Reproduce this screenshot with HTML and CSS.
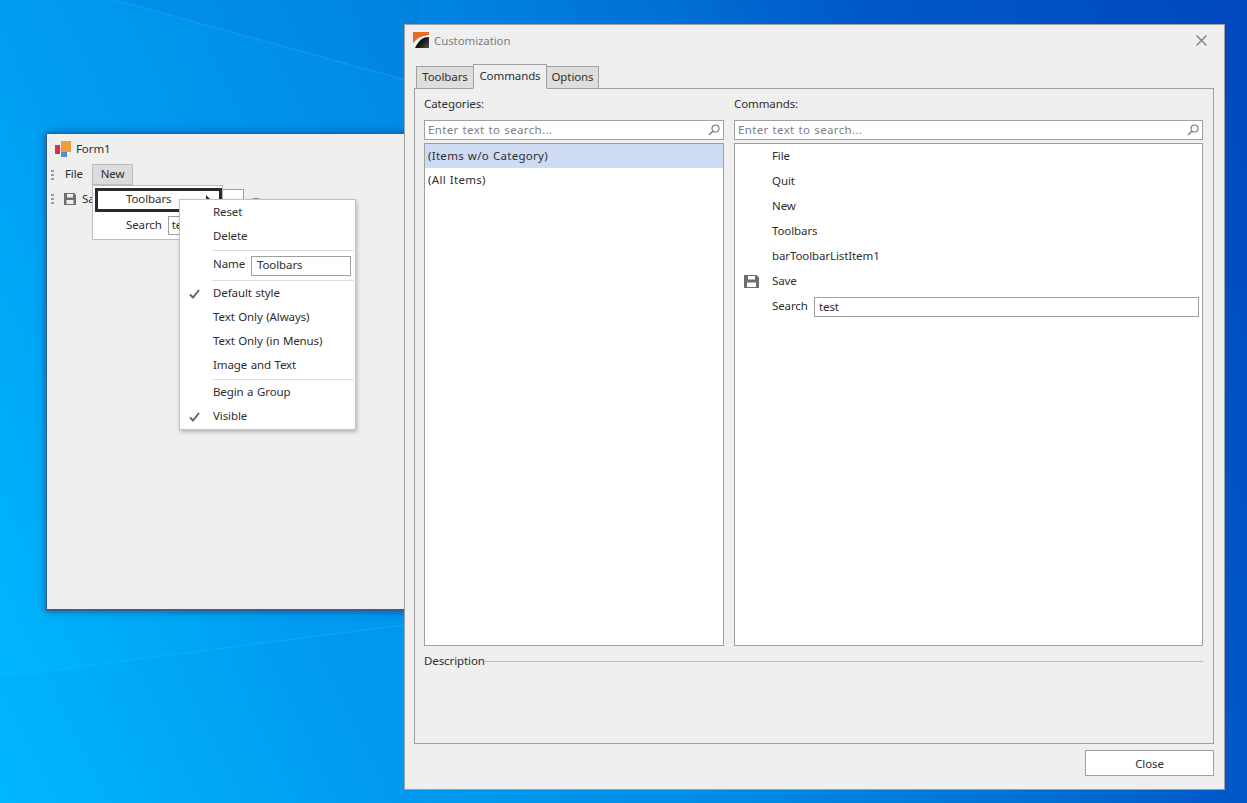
FILE: index.html
```html
<!DOCTYPE html>
<html lang="en">
<head>
<meta charset="utf-8">
<title>Customization</title>
<link rel="stylesheet" href="styles.css">
</head>
<body>
<div class="desktop">
  <svg class="wallpaper" viewBox="0 0 1247 803" preserveAspectRatio="none">
    <path d="M115 0 L420 84 L420 0 Z" fill="#0060c8" opacity=".1"/>
    <path d="M115 0 L420 84" fill="none" stroke="#30a8ff" stroke-width="1.500" opacity=".35"/>
    <path d="M0 677 L420 623 L420 803 L0 803 Z" fill="#0090e8" opacity=".08"/>
    <path d="M0 677 L420 623" fill="none" stroke="#10c0ff" stroke-width="1.500" opacity=".35"/>
  </svg>

  <section class="form">
    <header class="form-title">
      <svg class="form-logo" viewBox="0 0 16 16"><rect x="0" y="4" width="5" height="9" fill="#d4344a"/><rect x="6" y="0" width="10" height="11" fill="#f39a3e"/><rect x="6" y="11" width="6" height="5" fill="#4f8fd0"/></svg>
      <span>Form1</span>
    </header>
    <div class="menubar">
      <i class="grip"></i>
      <span class="menu-item">File</span>
      <span class="menu-item open">New</span>
    </div>
    <div class="toolbar">
      <i class="grip"></i>
      <svg class="save-icon" viewBox="0 0 12 12"><path d="M0 0H10L12 2V12H0Z" fill="#6d6d72"/><rect x="3" y="1" width="6" height="3.500" fill="#efefef"/><rect x="2.500" y="7" width="7" height="4" fill="#efefef"/></svg>
      <span class="tool-label">Save</span>
    </div>
    <div class="tool-input"></div>
    <i class="tool-tip"></i>
    <div class="dropdown">
      <div class="drop-row focus"><span>Toolbars</span><i class="arrow"></i></div>
      <div class="drop-row"><span>Search</span><span class="drop-input">test</span></div>
    </div>
    <div class="context">
      <div class="ctx-row">Reset</div>
      <div class="ctx-row">Delete</div>
      <hr class="ctx-sep">
      <div class="ctx-row name"><span class="name-label">Name</span><span class="name-input">Toolbars</span></div>
      <hr class="ctx-sep">
      <div class="ctx-row"><svg class="check" viewBox="0 0 11 10"><path d="M1 5.500L4 8.500L10 1" fill="none" stroke="#666" stroke-width="2"/></svg>Default style</div>
      <div class="ctx-row">Text Only (Always)</div>
      <div class="ctx-row">Text Only (in Menus)</div>
      <div class="ctx-row">Image and Text</div>
      <hr class="ctx-sep">
      <div class="ctx-row">Begin a Group</div>
      <div class="ctx-row"><svg class="check" viewBox="0 0 11 10"><path d="M1 5.500L4 8.500L10 1" fill="none" stroke="#666" stroke-width="2"/></svg>Visible</div>
    </div>
  </section>

  <section class="dialog">
    <header class="dialog-title">
      <svg class="dialog-logo" viewBox="0 0 16 16">
        <defs><linearGradient id="logo-dark" x1="0" y1="0" x2="1" y2="1"><stop offset=".45" stop-color="#000"/><stop offset="1" stop-color="#555"/></linearGradient></defs>
        <rect width="16" height="16" fill="url(#logo-dark)"/>
        <path d="M0 0H16V3C9 3 4 6 0 11Z" fill="#ea6a22"/>
        <path d="M0 11C4 6 9 3 16 3V5C10 5 6 8 2 16H0Z" fill="#f6f6f6"/>
      </svg>
      <span class="dialog-name">Customization</span>
      <svg class="close-x" viewBox="0 0 11 11"><path d="M.5 .5L10.500 10.500M10.500 .5L.5 10.500" stroke="#7a7a7a" stroke-width="1.200" fill="none"/></svg>
    </header>
    <nav class="tabs">
      <span class="tab">Toolbars</span>
      <span class="tab active">Commands</span>
      <span class="tab">Options</span>
    </nav>
    <div class="panel">
      <div class="columns">
        <div class="col col-left">
          <div class="col-label">Categories:</div>
          <div class="search"><span>Enter text to search...</span><svg class="lens" viewBox="0 0 12 12"><circle cx="7.500" cy="4.500" r="3.500" fill="none" stroke="#7d7d7d" stroke-width="1.200"/><path d="M5 7L1 11" stroke="#7d7d7d" stroke-width="1.500"/></svg></div>
          <div class="list">
            <div class="cat selected">(Items w/o Category)</div>
            <div class="cat">(All Items)</div>
          </div>
        </div>
        <div class="col col-right">
          <div class="col-label">Commands:</div>
          <div class="search"><span>Enter text to search...</span><svg class="lens" viewBox="0 0 12 12"><circle cx="7.500" cy="4.500" r="3.500" fill="none" stroke="#7d7d7d" stroke-width="1.200"/><path d="M5 7L1 11" stroke="#7d7d7d" stroke-width="1.500"/></svg></div>
          <div class="list commands">
            <div class="cmd"><span class="cmd-icon"></span>File</div>
            <div class="cmd"><span class="cmd-icon"></span>Quit</div>
            <div class="cmd"><span class="cmd-icon"></span>New</div>
            <div class="cmd"><span class="cmd-icon"></span>Toolbars</div>
            <div class="cmd"><span class="cmd-icon"></span>barToolbarListItem1</div>
            <div class="cmd"><span class="cmd-icon"><svg class="cmd-save" viewBox="0 0 15 13"><path d="M0 0H12.500L15 2.500V13H0Z" fill="#6d6d72"/><rect x="4" y="1" width="7" height="3.500" fill="#fff"/><rect x="3" y="7.500" width="9" height="4.500" fill="#fff"/></svg></span>Save</div>
            <div class="cmd"><span class="cmd-icon"></span><span class="cmd-label">Search</span><span class="cmd-input">test</span></div>
          </div>
        </div>
      </div>
      <div class="description"><span>Description</span><i></i></div>
    </div>
    <footer class="dialog-foot"><button class="close-btn">Close</button></footer>
  </section>
</div>
</body>
</html>
```
FILE: styles.css
```css
* { box-sizing: border-box; }
html, body { margin: 0; padding: 0; }
body { font: 11.5px/14px "Noto Sans", "Open Sans", sans-serif; letter-spacing: -.1px; word-spacing: .6px; color: #2e2e2e; overflow: hidden; }
.desktop {
  position: relative; width: 1247px; height: 803px; overflow: hidden;
  background: linear-gradient(65deg, #00bbff 0%, #009cf0 24%, #008be6 45%, #0070d4 64%, #0058c8 76%, #0048c0 100%);
}
.wallpaper { position: absolute; inset: 0; width: 100%; height: 100%; }

.form {
  position: absolute; left: 46px; top: 133px; width: 500px; height: 478px;
  background: #efefef; border: 1px solid #3b5a96; border-width: 1px 1px 2px 1px;
  box-shadow: 0 0 8px rgba(0, 30, 80, .55);
}
.form-title { display: flex; align-items: center; gap: 5px; height: 29px; padding: 2px 0 1px 8px; }
.form-logo { width: 16px; height: 16px; }
.menubar { display: flex; align-items: center; height: 21px; margin-top: 1px; padding-left: 4px; }
.grip { display: block; width: 3px; height: 10px; background: repeating-linear-gradient(#9a9a9a 0 2px, transparent 2px 4px); }
.menu-item { display: flex; align-items: center; justify-content: center; height: 21px; padding-bottom: 1px; }
.menubar .menu-item:nth-child(2) { width: 27px; margin-left: 10px; justify-content: flex-start; padding-left: 1px; }
.menu-item.open { width: 41px; margin-left: 1px; background: #dcdcdc; border: 1px solid #bdbdbd; }
.toolbar { display: flex; align-items: center; height: 22px; margin-top: 3px; padding-left: 4px; }
.save-icon { width: 12px; height: 12px; margin-left: 10px; }
.tool-label { margin-left: 6px; }
.tool-input { position: absolute; left: 175px; top: 55px; width: 22px; height: 20px; border: 1px solid #a0a0a0; background: #fff; }
.tool-tip { position: absolute; left: 206px; top: 64px; width: 6px; height: 2px; background: #8a8a8a; }

.dropdown {
  position: absolute; left: 45px; top: 51px; width: 131px; height: 55px;
  background: #fff; border: 1px solid #bdbdbd; padding: 2px 1px;
}
.drop-row { display: flex; align-items: center; height: 25px; padding: 0 0 1px 32px; position: relative; }
.drop-row.focus { border: 3px solid #2a2a2a; padding: 0 0 2px 28px; height: 24px; margin: 0 1px 1px; width: 127px; }
.arrow { position: absolute; left: 108px; top: 4px; width: 0; height: 0; border: 5px solid transparent; border-left-color: #333; border-right: 0; }
.drop-input { flex: none; margin: 1px 0 0 6px; width: 60px; height: 19px; padding: 1px 3px; border: 1px solid #a0a0a0; background: #fff; }

.context {
  position: absolute; left: 132px; top: 65px; width: 177px; height: 231px; z-index: 2;
  background: #fff; border: 1px solid #c4c4c4; padding-top: 1px;
  box-shadow: 1px 2px 4px rgba(0, 0, 0, .25);
}
.ctx-row { position: relative; display: flex; align-items: center; height: 24px; padding: 0 0 2px 33px; }
.ctx-row.name { height: 27px; justify-content: space-between; padding: 1px 4px 0 33px; }
.name-label { margin-bottom: 4px; }
.ctx-sep { height: 1px; margin: 1px 1px 1px 32px; border: 0; background: #ddd; }
.name-input { flex: none; width: 100px; height: 20px; padding: 1px 5px; border: 1px solid #a0a0a0; background: #fff; }
.check { position: absolute; left: 9px; top: 7px; width: 11px; height: 10px; }

.dialog {
  position: absolute; left: 404px; top: 24px; width: 821px; height: 766px;
  display: flex; flex-direction: column; background: #efefef; border: 1px solid #a0a0a0;
}
.dialog-title { display: flex; align-items: center; height: 31px; padding: 0 8px; }
.dialog-logo { width: 16px; height: 16px; margin-top: -1px; }
.dialog-name { margin-left: 5px; color: #7e7e7e; }
.close-x { margin-left: auto; margin-right: 9px; width: 11px; height: 11px; }
.tabs { display: flex; align-items: flex-end; height: 33px; padding-left: 11px; margin-bottom: -1px; position: relative; z-index: 1; }
.tab { display: flex; align-items: center; justify-content: center; height: 23px; border: 1px solid #a0a0a0; background: #dedede; margin-left: -1px; padding: 0 5px 1px; }
.tab:first-child { margin-left: 0; width: 58px; }
.tab:nth-child(2) { width: 75px; }
.tab:nth-child(3) { width: 53px; }
.tab.active { width: 74px; height: 25px; background: #efefef; border-bottom-color: #efefef; padding-bottom: 1px; z-index: 1; }

.panel { display: flex; flex-direction: column; margin: 0 10px 0 9px; height: 656px; border: 1px solid #a0a0a0; }
.columns { display: flex; gap: 10px; padding: 0 10px 0 9px; }
.col { display: flex; flex-direction: column; }
.col-left { width: 300px; }
.col-right { width: 469px; }
.col-label { height: 31px; padding-top: 8px; }
.search { display: flex; align-items: center; justify-content: space-between; height: 20px; padding: 0 3px; background: #fff; border: 1px solid #a0a0a0; color: #7f7f7f; letter-spacing: .35px; }
.lens { width: 12px; height: 12px; }
.list { height: 503px; margin-top: 3px; background: #fff; border: 1px solid #a0a0a0; }
.cat { display: flex; align-items: center; height: 24px; padding-left: 3px; letter-spacing: .29px; }
.cat.selected { background: #cddcf3; }
.cmd { display: flex; align-items: center; height: 25px; padding: 0 3px 1px 0; }
.cmd-icon { flex: none; display: flex; align-items: center; width: 37px; padding-left: 9px; }
.cmd-save { width: 15px; height: 13px; }
.cmd-label { flex: none; width: 42px; }
.cmd-input { flex: 1; margin-top: 1px; height: 20px; padding: 2px 4px; background: #fff; border: 1px solid #a0a0a0; }
.description { display: flex; align-items: center; height: 16px; margin: 7px 10px 0 9px; }
.description i { flex: 1; height: 1px; background: #bdbdbd; }
.dialog-foot { display: flex; justify-content: flex-end; padding: 6px 10px 0 0; }
.close-btn { width: 129px; height: 26px; padding: 1px 0 0; font: inherit; letter-spacing: inherit; color: #2e2e2e; background: #fff; border: 1px solid #a0a0a0; }
```
